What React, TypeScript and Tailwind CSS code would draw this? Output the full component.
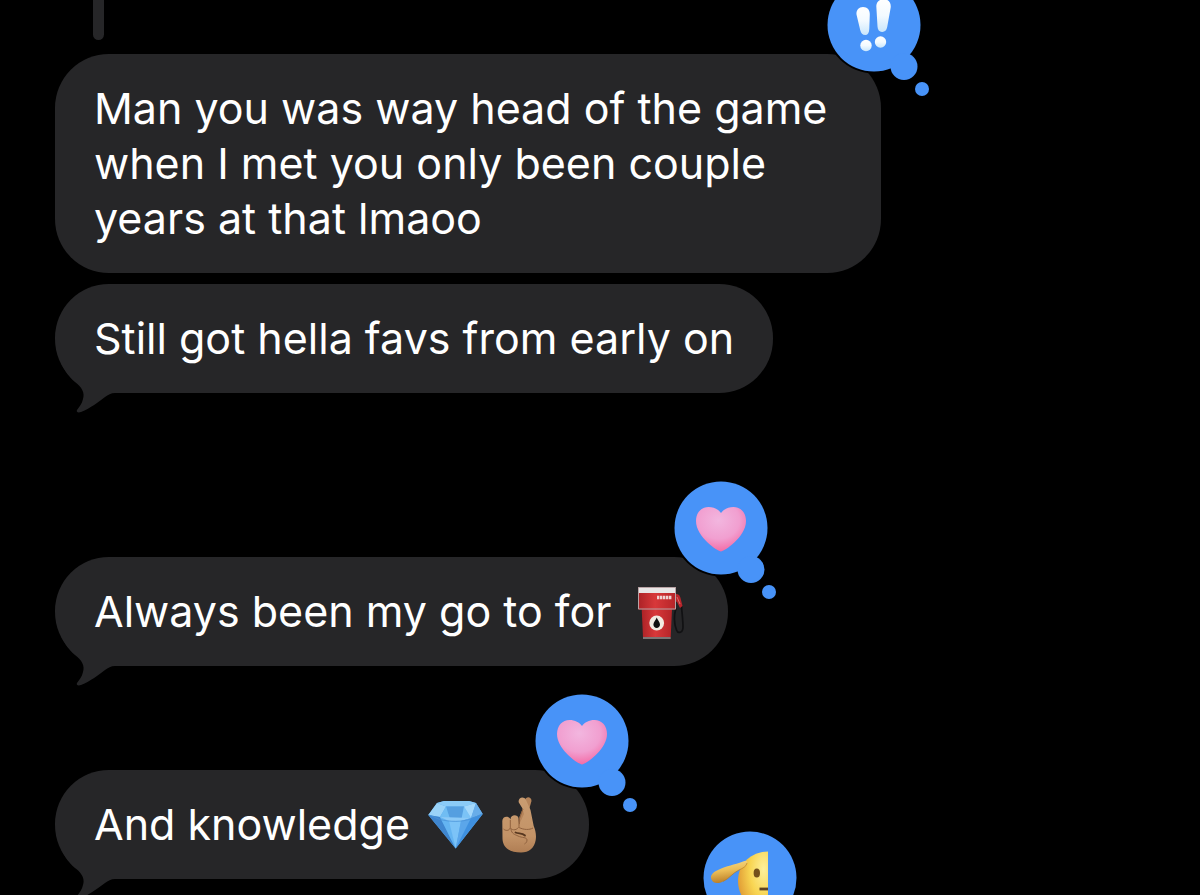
import type { ReactNode } from "react";

function Tail() {
  return (
    <svg
      className="absolute -bottom-[21px] left-0 h-16 w-[60px] fill-[#262628]"
      viewBox="0 0 60 64"
      aria-hidden="true"
    >
      <path d="M3 4C7 18 13 26 20 32C27 37 30 43 28 49C27 54 24 57 22 60C21 62 23 63 26 62C36 58 43 52 50 47C53 45 56 43 60 43V4Z" />
    </svg>
  );
}

function HeartIcon() {
  return (
    <path
      d="M47 70.5C44 70.5 22 56 22 40C22 31.5 27.5 26 34.5 26C40 26 44.5 28.5 47 32C49.5 28.5 54 26 59.5 26C66.5 26 72 31.5 72 40C72 56 50 70.5 47 70.5Z"
      fill="url(#heart)"
    />
  );
}

function ExclaimIcon() {
  return (
    <g fill="url(#exclaim)">
      <path d="M29.5 36.500C29 32 32 29 36 29C40.500 29 43 32 42.800 36.500L42.300 51C42 55 40.800 57 38.300 57C35.500 57 34 55.500 33.200 52Z" />
      <circle cx="39" cy="67.500" r="5.700" />
      <path d="M49.300 28C49.500 23.500 53 21 57 21.200C61.500 21.400 64.300 24.500 63.700 29.500L60.200 49C59.500 52.500 57.800 54 55 53.900C52.200 53.800 50.700 52 50.500 48.500Z" />
      <circle cx="53.500" cy="64" r="5.700" />
    </g>
  );
}

function SaluteIcon() {
  return (
    <g>
      <path d="M65 20.500C48 20.500 35 33 35 50C35 67 48 80 65 80Z" fill="url(#face)" />
      <path
        d="M44 32C45 29.500 43 29 40 30.500C31 34 24 34.500 15 39C9 41.500 7 45 8.500 48.500C10 52.500 15 53 20 50.500C27 47 29 42.500 36 39C40 37 43 36 44 32Z"
        fill="url(#hand)"
      />
      <path d="M20 50.500C27 47 29 42.500 36 39C40 37 43 36 44 32" fill="none" stroke="#b3761f" strokeWidth="1" opacity=".6" />
      <ellipse cx="53.800" cy="42" rx="3.200" ry="4.600" fill="#74511b" />
      <path d="M56.500 58H65" stroke="#5f4320" strokeWidth="2.800" />
    </g>
  );
}

function Reaction({ label, children }: { label: string; children: ReactNode }) {
  return (
    <svg
      className="absolute -right-[50px] -top-[76px] h-[120px] w-[104px]"
      viewBox="0 0 104 120"
      role="img"
      aria-label={label}
    >
      <g className="fill-black">
        <circle cx="47" cy="47" r="48.5" />
        <circle cx="77" cy="88.5" r="15" />
      </g>
      <g className="fill-[#4893f8]">
        <circle cx="47" cy="47" r="46.5" />
        <circle cx="77" cy="88.5" r="13.5" />
        <circle cx="95" cy="111" r="7" />
      </g>
      {children}
    </svg>
  );
}

function FuelPump() {
  return (
    <svg className="ml-2.5 inline-block h-[55px] w-[55px] overflow-visible align-top" viewBox="0 0 55 55" role="img" aria-label="fuel pump">
      <path d="M42 24C39 34 41 42 42.500 46C44 50 49 49 49 43C49 36 48 30 47.500 22" fill="none" stroke="#111113" strokeWidth="1.700" />
      <path d="M41 10C45 9.500 46 12 46.500 14L48.500 22L46 24L43 18L41 17Z" fill="#b8252b" />
      <path d="M43 13L46 20" stroke="#e06a6a" strokeWidth="1" />
      <path d="M7.700 25H38L36.700 53H9Z" fill="url(#pump)" />
      <path d="M9 53H36.700V55H9Z" fill="#7c7575" />
      <path d="M4 3.500H42V25.500H4Z" fill="url(#pump)" />
      <path d="M4 3.500H42L41 9H5Z" fill="#e8e6e6" />
      <path d="M4.500 3.500V25H41.500V3.500Z" fill="none" stroke="#b8a3a5" strokeWidth="1" />
      <path d="M23 13.500H38" stroke="#f0d2d2" strokeWidth="3.600" strokeDasharray="2.400 .6" />
      <circle cx="22.700" cy="39" r="7.400" fill="#f2ebe2" />
      <path d="M22.700 33.500C23.500 36 26 38 26 40.500C26 45 19.400 45 19.400 40.500C19.400 38 22 36 22.700 33.500Z" fill="#101010" />
    </svg>
  );
}

function Gem() {
  return (
    <svg className="ml-1.5 inline-block h-[55px] w-[55px] overflow-visible align-top" viewBox="0 0 55 55" role="img" aria-label="gem">
      <path d="M.3 18L9 6L16 4H41L48 6L54.700 17L27.700 51.500Z" fill="#58abed" />
      <path d="M.3 18L9 6L18 9.500L12 20Z" fill="#9ad3f8" />
      <path d="M9 6L16 4H41L48 6L36 9.500H18Z" fill="#8bcbf7" />
      <path d="M18 9.500H36L33.700 21H21.700Z" fill="#559fe0" />
      <path d="M18 9.500L21.700 21L12 20Z" fill="#70bdf3" />
      <path d="M36 9.500L43 21L33.700 21Z" fill="#7bc3f6" />
      <path d="M36 9.500L48 6L43 21Z" fill="#a4d8fb" />
      <path d="M48 6L54.700 17L43 21Z" fill="#68ade9" />
      <path d="M.3 18L12 20L27.700 51.500Z" fill="#3f86cf" />
      <path d="M12 20L21.700 23L27.700 51.500Z" fill="#64b4f1" />
      <path d="M12 20L43 21L33 24H21Z" fill="#8ccaf7" />
      <path d="M21 24H33L27.700 51.500Z" fill="#7cc3f7" />
      <path d="M33 24L43 21L27.700 51.500Z" fill="#5ba6ea" />
      <path d="M43 21L54.700 17L27.700 51.500Z" fill="#3f90df" />
      <path d="M1 18L12 22.500C22 25 34 25 43 22L54 17" fill="none" stroke="#4a93d8" strokeWidth=".8" />
    </svg>
  );
}

function CrossedFingers() {
  return (
    <svg className="inline-block h-[55px] w-[55px] overflow-visible align-top" viewBox="0 0 55 55" role="img" aria-label="crossed fingers">
      <path d="M23 30L24.500 20L28 11L30 3C31 -1 36.500 -.5 36.500 4L34.500 11L32 30Z" fill="#b5845a" />
      <path
        d="M7.300 24C7.300 18.500 14.500 18.500 15.500 22.500C15.500 17.500 22.500 17 23.500 21L24 28L29 17L27.500 11.500L23.800 5.500C22.500 .800 28.800 -1.500 31 3L35.500 13L38.700 29C40.500 33 41.500 38 40.700 43C39.500 51 34 55.500 26 55.500C15 55.500 8 51 7.500 42Z"
        fill="url(#skin)"
      />
      <path d="M15.300 23V31C14 34 10.500 34 8.500 32M15.300 31C17.500 34 22.500 33 24 29.500V22M28 12L24.500 21.500V27" fill="none" stroke="#90623f" strokeWidth="1" />
      <path d="M38 31C34.500 33 29 33 24 30.500M16 32C16.500 37 20 37.500 23 39C27 41 32 40 32 43C32 45 31 46 29.500 47" fill="none" stroke="#90623f" strokeWidth="1" />
      <path d="M20.500 35.500C24 37 27 35.500 30 38.500" fill="none" stroke="#57371f" strokeWidth="1.800" strokeLinecap="round" />
    </svg>
  );
}

type BubbleProps = {
  children?: ReactNode;
  className?: string;
  tail?: boolean;
  reaction?: ReactNode;
};

function Bubble({ children, className = "", tail = false, reaction }: BubbleProps) {
  return (
    <li
      className={`relative w-fit max-w-[826px] rounded-[54px] bg-[#262628] px-[39px] py-[27px] ${className}`}
    >
      {tail && <Tail />}
      {children && <p className="relative">{children}</p>}
      {reaction}
    </li>
  );
}

function Gradients() {
  return (
    <svg className="absolute h-0 w-0" aria-hidden="true">
      <defs>
        <radialGradient id="heart" cx=".45" cy=".3" r=".7">
          <stop offset="0" stopColor="#f2b6df" />
          <stop offset=".6" stopColor="#f19fd0" />
          <stop offset="1" stopColor="#f46ca6" />
        </radialGradient>
        <linearGradient id="exclaim" x1="0" y1="0" x2="0" y2="1">
          <stop offset="0" stopColor="#ffffff" />
          <stop offset=".5" stopColor="#f3faff" />
          <stop offset="1" stopColor="#c9e6fc" />
        </linearGradient>
        <radialGradient id="face" cx=".85" cy=".3" r=".9">
          <stop offset="0" stopColor="#fdf09c" />
          <stop offset=".5" stopColor="#f8d552" />
          <stop offset="1" stopColor="#e09a34" />
        </radialGradient>
        <linearGradient id="hand" x1="0" y1="0" x2=".2" y2="1">
          <stop offset="0" stopColor="#f7dc8c" />
          <stop offset=".5" stopColor="#ebbd56" />
          <stop offset="1" stopColor="#bb7f28" />
        </linearGradient>
        <linearGradient id="pump" x1="0" y1="0" x2="1" y2="0">
          <stop offset="0" stopColor="#ab2226" />
          <stop offset=".45" stopColor="#d8383a" />
          <stop offset="1" stopColor="#b52428" />
        </linearGradient>
        <linearGradient id="skin" x1="0" y1="0" x2="0" y2="1">
          <stop offset="0" stopColor="#c99c71" />
          <stop offset=".7" stopColor="#c39367" />
          <stop offset="1" stopColor="#b07e54" />
        </linearGradient>
      </defs>
    </svg>
  );
}

export default function App() {
  return (
    <main className="h-screen overflow-hidden bg-black pl-[55px] font-['Inter',sans-serif] text-[43px] leading-[55px] text-white">
      <Gradients />
      {/* end of the reply thread line */}
      <div className="ml-[38px] h-10 w-[11px] rounded-b-full bg-[#262628]" />
      <ul className="mt-[14px] flex flex-col">
        <Bubble
          className="w-full"
          reaction={
            <Reaction label="emphasized">
              <ExclaimIcon />
            </Reaction>
          }
        >
          Man you was way head of the game when I met you only been couple years at that lmaoo
        </Bubble>
        <Bubble className="mt-[11px]" tail>
          Still got hella favs from early on
        </Bubble>
        <Bubble
          className="mt-[164px]"
          tail
          reaction={
            <Reaction label="loved">
              <HeartIcon />
            </Reaction>
          }
        >
          Always been my go to for <FuelPump />
        </Bubble>
        <Bubble
          className="mt-[104px]"
          tail
          reaction={
            <Reaction label="loved">
              <HeartIcon />
            </Reaction>
          }
        >
          And knowledge <Gem /> <CrossedFingers />
        </Bubble>
        <Bubble
          className="mt-7 min-h-[109px] min-w-[702px]"
          reaction={
            <Reaction label="saluting">
              <SaluteIcon />
            </Reaction>
          }
        />
      </ul>
    </main>
  );
}
